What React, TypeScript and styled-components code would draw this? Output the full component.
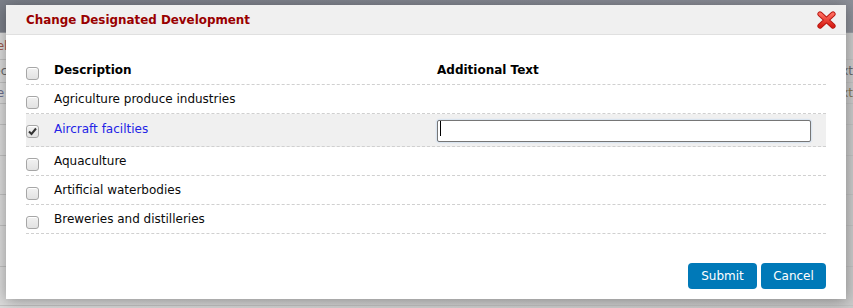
import React from "react";
import styled, { createGlobalStyle } from "styled-components";

const Global = createGlobalStyle`
  html, body { margin: 0; padding: 0; }
  body {
    width: 853px; height: 308px; overflow: hidden;
    font-family: "DejaVu Sans", Verdana, sans-serif;
    background: #d4d4d4;
  }
`;

const Page = styled.div`
  position: relative;
  width: 853px;
  height: 308px;
  overflow: hidden;
  background: linear-gradient(90deg, #dcdcdc 0%, #d2d2d2 50%, #cbcbcb 100%);
`;

const TopBar = styled.div`
  height: 32px;
  background: linear-gradient(90deg, #7b7f89 0%, #858892 60%, #8d9099 100%);
  border-bottom: 1px solid #9a9da4;
`;

const BgList = styled.div`
  display: flex;
  flex-direction: column;
`;

const BgRow = styled.div<{ $h: number }>`
  height: ${(p) => p.$h}px;
  display: flex;
  justify-content: space-between;
  align-items: center;
  border-bottom: 1px solid #c2c2c2;
  font-family: "DejaVu Sans", sans-serif;
  font-size: 12px;
  overflow: hidden;
`;

const BgText = styled.span<{ $c: string; $ml: number }>`
  color: ${(p) => p.$c};
  margin-left: ${(p) => p.$ml}px;
  white-space: nowrap;
`;

const Dialog = styled.div`
  position: absolute;
  left: 6px;
  top: 5px;
  width: 840px;
  height: 294px;
  background: #fff;
  box-shadow: 0 2px 14px rgba(0, 0, 0, 0.35);
  display: flex;
  flex-direction: column;
`;

const TitleBar = styled.div`
  height: 30px;
  box-sizing: border-box;
  background: #f0f0f0;
  border-bottom: 1px solid #e0e0e0;
  display: flex;
  align-items: center;
  justify-content: space-between;
  padding: 0 10px 0 20px;
`;

const Title = styled.h1`
  margin: 0;
  font-family: "DejaVu Sans", Verdana, sans-serif;
  font-weight: bold;
  font-size: 11.9px;
  color: #990000;
`;

const CloseButton = styled.button`
  border: 0;
  background: transparent;
  padding: 0;
  width: 19px;
  height: 18px;
  display: flex;
  cursor: pointer;
  margin-top: 1px;
`;

const Body = styled.div`
  flex: 1;
  padding: 23px 20px 0 20px;
`;

const Table = styled.div`
  display: flex;
  flex-direction: column;
  font-family: "DejaVu Sans", Verdana, sans-serif;
  font-size: 12px;
  color: #0a0a0a;
`;

const Row = styled.div<{ $h: number; $alt?: boolean }>`
  display: grid;
  grid-template-columns: 28px 383px 1fr;
  height: ${(p) => p.$h}px;
  border-bottom: 1px dashed #d0d0d0;
  background: ${(p) => (p.$alt ? "#f0f0f0" : "transparent")};
  align-items: center;
`;

const CheckCell = styled.div<{ $shift: number }>`
  display: flex;
  align-items: center;
  margin-top: ${(p) => p.$shift}px;
`;

const Check = styled.span`
  display: block;
  width: 11px;
  height: 11px;
  border: 1px solid #a6a6a6;
  border-radius: 3px;
  background: linear-gradient(180deg, #f2f2f2 0%, #e2e2e2 100%);
  position: relative;
  box-shadow: inset 0 1px 0 #fff;
`;

const HeadCell = styled.div`
  font-weight: bold;
  font-size: 12px;
  color: #000;
  margin-top: -2px;
`;

const TextCell = styled.div<{ $blue?: boolean; $shift?: number }>`
  color: ${(p) => (p.$blue ? "#2323e6" : "#0a0a0a")};
  margin-top: ${(p) => p.$shift ?? 0}px;
  white-space: nowrap;
`;

const Input = styled.input`
  box-sizing: border-box;
  width: 374px;
  height: 22px;
  border: 1px solid #767676;
  border-radius: 2px;
  outline: none;
  box-shadow: 0 0 2px #9ec5f0;
  background: #fff;
  padding: 0 2px;
  margin-top: 2px;
  font-size: 12px;
  font-family: "DejaVu Sans", sans-serif;
`;

const Caret = styled.span`
  display: block;
  width: 1px;
  height: 15px;
  background: #000;
  position: absolute;
  left: 3px;
  top: 3px;
`;

const InputWrap = styled.div`
  position: relative;
  width: 374px;
  display: flex;
`;

const Footer = styled.div`
  display: flex;
  justify-content: flex-end;
  gap: 4px;
  padding: 0 20px 10px 0;
`;

const Button = styled.button<{ $w: number }>`
  width: ${(p) => p.$w}px;
  height: 26px;
  border: 0;
  border-radius: 4px;
  background: #0079b8;
  color: #fff;
  font-family: "DejaVu Sans", Verdana, sans-serif;
  font-size: 12px;
  padding: 0;
  cursor: pointer;
`;

const CheckMark = () => (
  <svg width="11" height="11" viewBox="0 0 11 11" style={{ position: "absolute", left: 0, top: 0 }}>
    <path d="M2 5.5 L4.5 8 L9 2.5" fill="none" stroke="#333" strokeWidth="2" />
  </svg>
);

const CloseIcon = () => (
  <svg width="19" height="18" viewBox="0 0 19 18">
    <defs>
      <linearGradient id="xg" x1="0" y1="0" x2="0" y2="1">
        <stop offset="0" stopColor="#ff6b5e" />
        <stop offset="1" stopColor="#d81f16" />
      </linearGradient>
    </defs>
    <path d="M3 3 L16 15 M16 3 L3 15" stroke="#b51510" strokeWidth="5.2" strokeLinecap="round" />
    <path d="M3 3 L16 15 M16 3 L3 15" stroke="url(#xg)" strokeWidth="3.4" strokeLinecap="round" />
  </svg>
);

const items = [
  "Agriculture produce industries",
  "Aircraft facilties",
  "Aquaculture",
  "Artificial waterbodies",
  "Breweries and distilleries",
];

const bgRows: { h: number; l?: [string, string]; r?: [string, string] }[] = [
  { h: 26, l: ["Panel", "#a0594f"] },
  { h: 22, l: ["Select", "#6a6a6a"], r: ["Text", "#6a6a6a"] },
  { h: 20, l: ["Page", "#6d7090"], r: ["Text", "#8a7a5a"] },
  { h: 20 },
  { h: 30 },
  { h: 38 },
  { h: 30 },
  { h: 40 },
  { h: 38 },
];

export default function App() {
  return (
    <>
      <Global />
      <Page>
        <TopBar />
        <BgList>
          {bgRows.map((r, i) => (
            <BgRow key={i} $h={r.h}>
              <BgText $c={r.l ? r.l[1] : "transparent"} $ml={-25}>{r.l ? r.l[0] : ""}</BgText>
              <BgText $c={r.r ? r.r[1] : "transparent"} $ml={0}>{r.r ? r.r[0] : ""}</BgText>
            </BgRow>
          ))}
        </BgList>
        <Dialog>
          <TitleBar>
            <Title>Change Designated Development</Title>
            <CloseButton aria-label="Close">
              <CloseIcon />
            </CloseButton>
          </TitleBar>
          <Body>
            <Table>
              <Row $h={26}>
                <CheckCell $shift={4}>
                  <Check />
                </CheckCell>
                <HeadCell>Description</HeadCell>
                <HeadCell>Additional Text</HeadCell>
              </Row>
              {items.map((it, i) => {
                const sel = i === 1;
                return (
                  <Row key={it} $h={sel ? 32 : 28} $alt={sel}>
                    <CheckCell $shift={sel ? 2 : 7}>
                      <Check>{sel && <CheckMark />}</Check>
                    </CheckCell>
                    <TextCell $blue={sel} $shift={sel ? -3 : 0}>{it}</TextCell>
                    <div>
                      {sel && (
                        <InputWrap>
                          <Input type="text" defaultValue="" />
                          <Caret />
                        </InputWrap>
                      )}
                    </div>
                  </Row>
                );
              })}
            </Table>
          </Body>
          <Footer>
            <Button $w={69}>Submit</Button>
            <Button $w={65}>Cancel</Button>
          </Footer>
        </Dialog>
      </Page>
    </>
  );
}
